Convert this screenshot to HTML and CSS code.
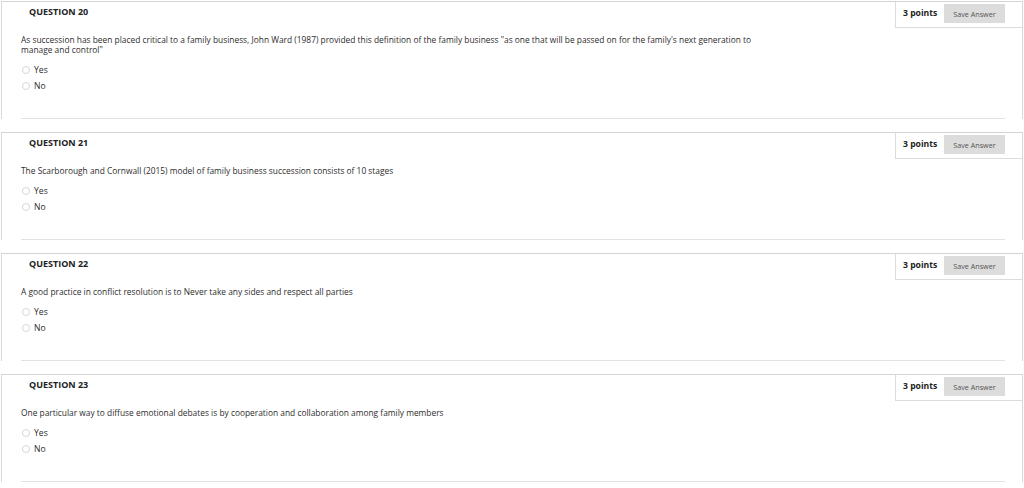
FILE: index.html
```html
<!DOCTYPE html>
<html>
<head>
<meta charset="utf-8">
<link rel="stylesheet" href="styles.css">
</head>
<body>
<div class="page">
  <section class="question">
    <div class="q-head">
      <h3 class="q-title">QUESTION 20</h3>
      <div class="points"><span class="pts">3 points</span><button class="save">Save Answer</button></div>
    </div>
    <div class="q-body">
      <p class="q-text">As succession has been placed critical to a family business, John Ward (1987) provided this definition of the family business "as one that will be passed on for the family's next generation to manage and control"</p>
      <label class="opt"><span class="radio"></span>Yes</label>
      <label class="opt"><span class="radio"></span>No</label>
    </div>
  </section>
  <section class="question">
    <div class="q-head">
      <h3 class="q-title">QUESTION 21</h3>
      <div class="points"><span class="pts">3 points</span><button class="save">Save Answer</button></div>
    </div>
    <div class="q-body">
      <p class="q-text">The Scarborough and Cornwall (2015) model of family business succession consists of 10 stages</p>
      <label class="opt"><span class="radio"></span>Yes</label>
      <label class="opt"><span class="radio"></span>No</label>
    </div>
  </section>
  <section class="question">
    <div class="q-head">
      <h3 class="q-title">QUESTION 22</h3>
      <div class="points"><span class="pts">3 points</span><button class="save">Save Answer</button></div>
    </div>
    <div class="q-body">
      <p class="q-text">A good practice in conflict resolution is to Never take any sides and respect all parties</p>
      <label class="opt"><span class="radio"></span>Yes</label>
      <label class="opt"><span class="radio"></span>No</label>
    </div>
  </section>
  <section class="question">
    <div class="q-head">
      <h3 class="q-title">QUESTION 23</h3>
      <div class="points"><span class="pts">3 points</span><button class="save">Save Answer</button></div>
    </div>
    <div class="q-body">
      <p class="q-text">One particular way to diffuse emotional debates is by cooperation and collaboration among family members</p>
      <label class="opt"><span class="radio"></span>Yes</label>
      <label class="opt"><span class="radio"></span>No</label>
    </div>
  </section>
</div>
</body>
</html>
```
FILE: styles.css
```css
html, body {
  margin: 0;
  padding: 0;
  background: #fff;
}
body {
  font-family: "Open Sans", "Liberation Sans", sans-serif;
  color: #333;
}
.page {
  padding: 1px 1px 0 1px;
  display: flex;
  flex-direction: column;
  gap: 13px;
}
.question {
  border-top: 1px solid #d4d4d4;
  border-left: 1px solid #d9d9d9;
  border-right: 1px solid #d9d9d9;
  padding-left: 19px;
}
.q-head {
  display: flex;
  justify-content: space-between;
  align-items: flex-start;
}
.q-title {
  margin: 4px 0 0 8px;
  font-size: 9px;
  line-height: 12px;
  font-weight: 700;
  color: #222;
}
.points {
  box-sizing: border-box;
  width: 127px;
  height: 26px;
  border-left: 1px solid #dcdcdc;
  border-bottom: 1px solid #dcdcdc;
  padding: 2px 17px 0 7px;
  display: flex;
  align-items: flex-start;
  justify-content: space-between;
}
.pts {
  font-size: 8.6px;
  line-height: 19px;
  font-weight: 700;
  color: #222;
}
.save {
  width: 61px;
  height: 19px;
  border: none;
  background: #dcdcdc;
  color: #555;
  font-family: "Open Sans", "Liberation Sans", sans-serif;
  font-size: 7.2px;
  padding: 0;
  margin: 0;
}
.q-body {
  margin-right: 17px;
  padding-bottom: 24px;
  border-bottom: 1px solid #e2e2e2;
}
.q-text {
  margin: 7px 0 7px 0;
  max-width: 745px;
  font-size: 8.4px;
  line-height: 10px;
  color: #2d2d2d;
}
.opt {
  display: flex;
  align-items: center;
  gap: 4px;
  height: 16px;
  font-size: 8.6px;
  color: #2d2d2d;
}
.radio {
  margin-left: 1px;
  width: 6px;
  height: 6px;
  border: 1px solid #d6d6d6;
  border-radius: 50%;
  background: #fff;
}
```
